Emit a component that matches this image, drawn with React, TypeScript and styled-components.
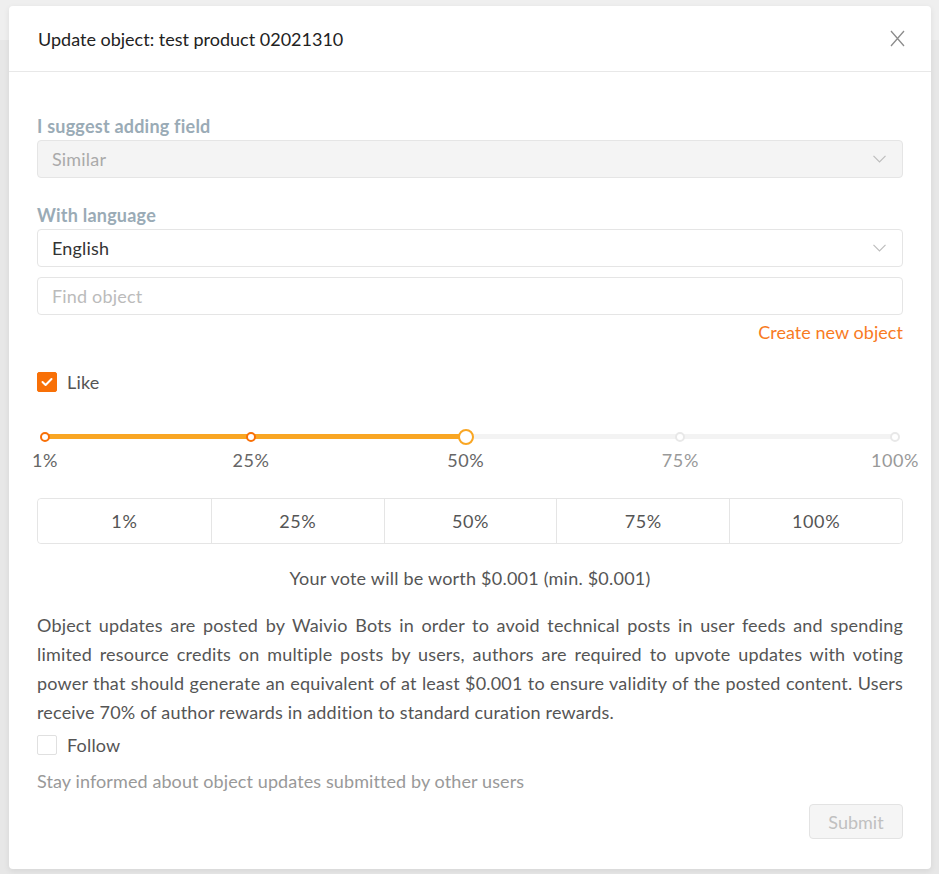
import React from "react";
import styled, { createGlobalStyle } from "styled-components";

const Global = createGlobalStyle`
  html, body { margin: 0; padding: 0; }
  body {
    background: linear-gradient(#efefef 0, #efefef 40px, #e7e7e7 40px);
    font-family: Lato, "Open Sans", sans-serif;
    -webkit-font-smoothing: antialiased;
  }
`;

const Page = styled.div`
  padding: 6px 8px 5px 9px;
  min-height: 874px;
  box-sizing: border-box;
`;

const Modal = styled.div`
  background: #fff;
  border-radius: 4px;
  box-shadow: 0 2px 6px rgba(0, 0, 0, 0.08);
  letter-spacing: 0.18px;
`;

const Header = styled.div`
  height: 65px;
  padding: 0 26px 0 29px;
  display: flex;
  align-items: center;
  justify-content: space-between;
  border-bottom: 1px solid #e8e8e8;
`;

const Title = styled.div`
  font-size: 18px;
  color: #222;
  line-height: 24px;
  letter-spacing: 0;
`;

const CloseBtn = styled.button`
  border: 0;
  background: none;
  padding: 0;
  width: 16px;
  height: 18px;
  display: flex;
  align-items: center;
  justify-content: center;
  cursor: pointer;
`;

const Body = styled.div`
  padding: 42px 28px 30px 28px;
  display: flex;
  flex-direction: column;
  font-size: 18px;
`;

const Label = styled.div<{ $mt?: number }>`
  font-weight: 700;
  color: #9aabb6;
  line-height: 24px;
  letter-spacing: 0.22px;
  margin-top: ${(p) => p.$mt ?? 0}px;
  margin-bottom: 2px;
`;

const SelectBox = styled.div<{ $disabled?: boolean }>`
  height: 38px;
  box-sizing: border-box;
  border: 1px solid #e5e5e5;
  border-radius: 4px;
  background: ${(p) => (p.$disabled ? "#f4f4f4" : "#fff")};
  display: flex;
  align-items: center;
  justify-content: space-between;
  padding: 0 16px 0 14px;
  color: ${(p) => (p.$disabled ? "#aaa" : "#333")};
`;

const Input = styled.div`
  margin-top: 10px;
  height: 38px;
  box-sizing: border-box;
  border: 1px solid #e5e5e5;
  border-radius: 4px;
  display: flex;
  align-items: center;
  padding: 0 14px;
  color: #bbb;
`;

const CreateLink = styled.a`
  align-self: flex-end;
  margin-top: 5px;
  line-height: 24px;
  color: #f87b1f;
  letter-spacing: 0.05px;
  text-decoration: none;
  cursor: pointer;
`;

const CheckRow = styled.label<{ $mt: number }>`
  display: flex;
  align-items: center;
  gap: 10px;
  height: 24px;
  margin-top: ${(p) => p.$mt}px;
  color: #555;
`;

const Box = styled.span<{ $checked?: boolean }>`
  width: 20px;
  height: 20px;
  box-sizing: border-box;
  border-radius: 2px;
  border: 1px solid ${(p) => (p.$checked ? "#f87007" : "#e0e0e0")};
  background: ${(p) => (p.$checked ? "#f87007" : "#fff")};
  display: flex;
  align-items: center;
  justify-content: center;
`;

const SliderWrap = styled.div`
  margin-top: 30px;
  padding: 0 8px;
`;

const Track = styled.div`
  position: relative;
  height: 24px;
`;

const Rail = styled.div`
  position: absolute;
  left: 0;
  right: 0;
  top: 10px;
  height: 5px;
  border-radius: 3px;
  background: #f3f3f3;
`;

const Fill = styled.div`
  position: absolute;
  left: 0;
  top: 10px;
  height: 5px;
  border-radius: 3px;
  background: #f9a623;
`;

const Dot = styled.span<{ $active: boolean }>`
  position: absolute;
  top: 12.5px;
  width: 10px;
  height: 10px;
  box-sizing: border-box;
  border-radius: 50%;
  background: #fff;
  border: 2px solid ${(p) => (p.$active ? "#f87007" : "#e8e8e8")};
  transform: translate(-50%, -50%);
`;

const Handle = styled.span`
  position: absolute;
  top: 12.5px;
  width: 16px;
  height: 16px;
  box-sizing: border-box;
  border-radius: 50%;
  background: #fff;
  border: 2px solid #f9a623;
  transform: translate(-50%, -50%);
`;

const Marks = styled.div`
  position: relative;
  height: 22px;
  margin-top: 1px;
`;

const Mark = styled.span<{ $active: boolean }>`
  position: absolute;
  top: 0;
  transform: translateX(-50%);
  line-height: 22px;
  letter-spacing: 0.6px;
  color: ${(p) => (p.$active ? "#666" : "#999")};
  white-space: nowrap;
`;

const Segments = styled.div`
  margin-top: 27px;
  height: 46px;
  box-sizing: border-box;
  display: grid;
  grid-template-columns: repeat(5, 1fr);
  border: 1px solid #e5e5e5;
  border-radius: 4px;
`;

const Segment = styled.button`
  border: 0;
  border-left: 1px solid #e5e5e5;
  background: #fff;
  font-family: inherit;
  font-size: 18px;
  letter-spacing: 0.6px;
  color: #555;
  cursor: pointer;
  &:first-child {
    border-left: 0;
    border-radius: 4px 0 0 4px;
  }
  &:last-child {
    border-radius: 0 4px 4px 0;
  }
`;

const VoteText = styled.div`
  margin-top: 22px;
  text-align: center;
  line-height: 24px;
  letter-spacing: 0.22px;
  color: #555;
`;

const Para = styled.p`
  margin: 21px 0 0 0;
  line-height: 29px;
  color: #555;
  text-align: justify;
`;

const Hint = styled.div`
  margin-top: 12px;
  line-height: 24px;
  letter-spacing: 0.1px;
  color: #999;
`;

const Footer = styled.div`
  margin-top: 11px;
  display: flex;
  justify-content: flex-end;
`;

const SubmitBtn = styled.button`
  height: 35px;
  width: 94px;
  padding: 0;
  border: 1px solid #e3e3e3;
  border-radius: 4px;
  background: #f5f5f5;
  color: #c0c0c0;
  font-family: inherit;
  font-size: 18px;
  cursor: not-allowed;
`;

const Chevron = () => (
  <svg width="13" height="8" viewBox="0 0 13 8" fill="none">
    <path d="M0.5 0.8 L6.5 6.8 L12.5 0.8" stroke="#bdbdbd" strokeWidth="1.2" />
  </svg>
);

const CloseIcon = () => (
  <svg width="15" height="17" viewBox="0 0 15 17" fill="none">
    <path d="M1 1 L14 16 M14 1 L1 16" stroke="#8c8c8c" strokeWidth="1.3" />
  </svg>
);

const Tick = () => (
  <svg width="12" height="10" viewBox="0 0 12 10" fill="none">
    <path d="M1.5 5 L4.6 8 L10.5 2" stroke="#fff" strokeWidth="2" strokeLinecap="round" strokeLinejoin="round" />
  </svg>
);

const marks = [1, 25, 50, 75, 100];
const value = 50;
const pos = (v: number) => ((v - 1) / 99) * 100;

export default function App() {
  return (
    <>
      <Global />
      <Page>
        <Modal>
          <Header>
            <Title>Update object: test product 02021310</Title>
            <CloseBtn aria-label="Close">
              <CloseIcon />
            </CloseBtn>
          </Header>
          <Body>
            <Label>I suggest adding field</Label>
            <SelectBox $disabled>
              <span>Similar</span>
              <Chevron />
            </SelectBox>
            <Label $mt={25}>With language</Label>
            <SelectBox>
              <span>English</span>
              <Chevron />
            </SelectBox>
            <Input>Find object</Input>
            <CreateLink>Create new object</CreateLink>
            <CheckRow $mt={26}>
              <Box $checked>
                <Tick />
              </Box>
              Like
            </CheckRow>
            <SliderWrap>
              <Track>
                <Rail />
                <Fill style={{ width: `${pos(value)}%` }} />
                {marks
                  .filter((m) => m !== value)
                  .map((m) => (
                    <Dot key={m} $active={m < value} style={{ left: `${pos(m)}%` }} />
                  ))}
                <Handle style={{ left: `${pos(value)}%` }} />
              </Track>
              <Marks>
                {marks.map((m) => (
                  <Mark key={m} $active={m <= value} style={{ left: `${pos(m)}%` }}>
                    {m}%
                  </Mark>
                ))}
              </Marks>
            </SliderWrap>
            <Segments>
              {marks.map((m) => (
                <Segment key={m}>{m}%</Segment>
              ))}
            </Segments>
            <VoteText>Your vote will be worth $0.001 (min. $0.001)</VoteText>
            <Para>
              Object updates are posted by Waivio Bots in order to avoid technical posts in user feeds
              and spending limited resource credits on multiple posts by users, authors are required to
              upvote updates with voting power that should generate an equivalent of at least $0.001 to
              ensure validity of the posted content. Users receive 70% of author rewards in addition to
              standard curation rewards.
            </Para>
            <CheckRow $mt={6}>
              <Box />
              Follow
            </CheckRow>
            <Hint>Stay informed about object updates submitted by other users</Hint>
            <Footer>
              <SubmitBtn disabled>Submit</SubmitBtn>
            </Footer>
          </Body>
        </Modal>
      </Page>
    </>
  );
}
